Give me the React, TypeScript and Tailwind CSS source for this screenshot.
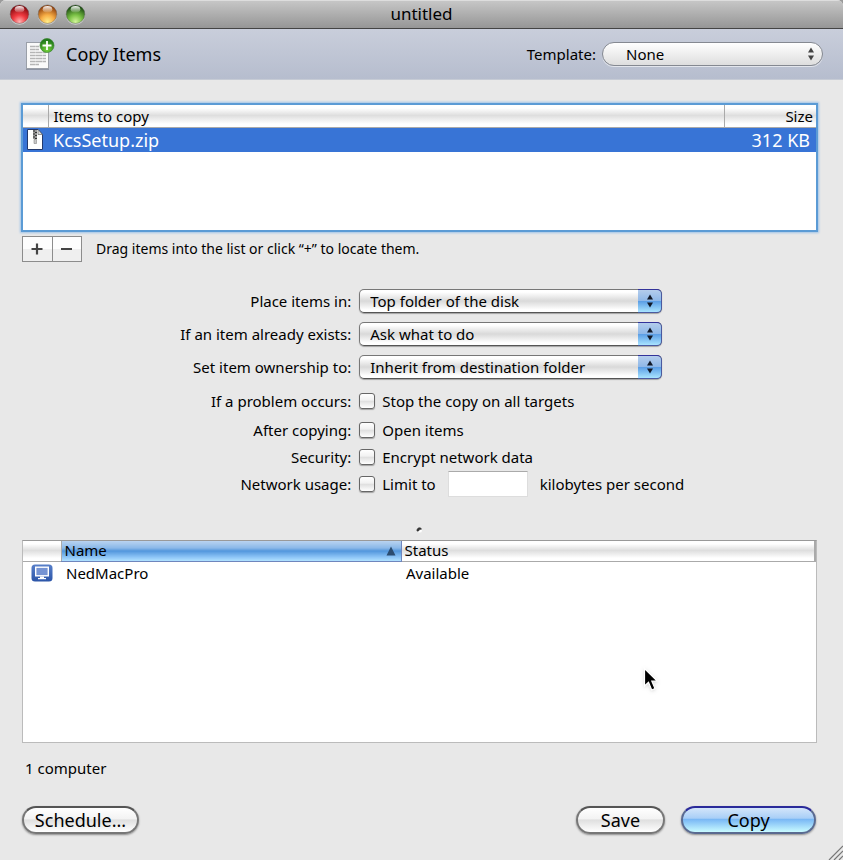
import { FunctionComponent, ReactNode, useState } from "react";

interface SelectProps {
  id: string;
  value: string;
}

const Arrows: FunctionComponent<{ color: string }> = ({ color }) => (
  <svg width="8" height="14" viewBox="0 0 8 14" fill={color}>
    <path d="M4 0.5 7 5.5H1z" />
    <path d="M4 13.5 1 8.5h6z" />
  </svg>
);

const AquaSelect: FunctionComponent<SelectProps> = ({ id, value }) => (
  <div className="relative h-6 w-[303px]">
    <select
      id={id}
      defaultValue={value}
      className="block h-6 w-full appearance-none rounded-[5px] border border-[#777] border-b-[#555] bg-linear-to-b from-white from-10% via-[#d9d9d9] via-50% to-white to-90% pr-7 pl-[10px] leading-5 shadow-[0_1px_1px_rgba(0,0,0,0.3)]"
    >
      <option>{value}</option>
    </select>
    <span className="pointer-events-none absolute inset-y-0 right-0 flex w-6 items-center justify-center rounded-r-[5px] border border-l-0 border-[#4a5aa0] border-t-[#33339a] bg-[linear-gradient(#b4cdec,#8fb8e8_48%,#5c9fe6_52%,#a9e4ff)]">
      <Arrows color="#111827" />
    </span>
  </div>
);

const FormRow: FunctionComponent<{ children: ReactNode }> = ({ children }) => (
  <div className="flex items-center gap-2">{children}</div>
);

interface CheckRowProps {
  title: string;
  label: string;
  id: string;
  children?: ReactNode;
}

const CheckRow: FunctionComponent<CheckRowProps> = ({ title, label, id, children }) => (
  <FormRow>
    <span className="w-5/12 text-right">{title}</span>
    <div className="flex h-[27px] items-center">
      <input
        id={id}
        type="checkbox"
        className="h-4 w-4 appearance-none rounded-[3px] border border-[#666] bg-[linear-gradient(#fff,#f1f1f1_45%,#dedede_50%,#fff)] shadow-[0_1px_1px_rgba(0,0,0,0.3)] checked:bg-blue-400"
      />
      <label htmlFor={id} className="pl-[7px]">
        {label}
      </label>
      {children}
    </div>
  </FormRow>
);

const TrafficLights = () => (
  <svg width="78" height="24" viewBox="0 0 78 24">
    <defs>
      <radialGradient id="red" cx="0.5" cy="0.9" r="0.8">
        <stop offset="0" stopColor="#ffb4b4" />
        <stop offset="0.45" stopColor="#f03a40" />
        <stop offset="1" stopColor="#8a0b10" />
      </radialGradient>
      <radialGradient id="amber" cx="0.5" cy="0.9" r="0.8">
        <stop offset="0" stopColor="#ffed88" />
        <stop offset="0.45" stopColor="#f7ad45" />
        <stop offset="1" stopColor="#94430c" />
      </radialGradient>
      <radialGradient id="green" cx="0.5" cy="0.9" r="0.8">
        <stop offset="0" stopColor="#d2f59a" />
        <stop offset="0.45" stopColor="#7bc246" />
        <stop offset="1" stopColor="#1d4f12" />
      </radialGradient>
      <linearGradient id="shine" x1="0" y1="0" x2="0" y2="1">
        <stop offset="0" stopColor="#fff" stopOpacity="0.95" />
        <stop offset="1" stopColor="#fff" stopOpacity="0.1" />
      </linearGradient>
    </defs>
    {["red", "amber", "green"].map((name, i) => (
      <g key={name} transform={`translate(${i * 28} 0)`}>
        <circle cx="10.5" cy="13.2" r="9.5" fill="#fff" opacity="0.5" />
        <circle cx="10.5" cy="12.2" r="9.3" fill={`url(#${name})`} stroke="#555" strokeOpacity="0.5" strokeWidth="0.8" />
        <ellipse cx="10.5" cy="7.2" rx="4.8" ry="3.2" fill="url(#shine)" />
      </g>
    ))}
  </svg>
);

const CopyItemsIcon = () => (
  <svg width="30" height="34" viewBox="0 0 30 34">
    <defs>
      <radialGradient id="badge" cx="0.5" cy="0.8" r="0.7">
        <stop offset="0" stopColor="#78d53c" />
        <stop offset="1" stopColor="#20791b" />
      </radialGradient>
    </defs>
    <path d="M1 32.5h23" stroke="#6f7685" strokeOpacity="0.6" />
    <rect x="1.5" y="5.5" width="22" height="26" fill="#fafafa" stroke="#9a9fa8" />
    <path
      d="M5 9.5h9M5 12.5h9M5 15.5h16M5 18.5h16M5 21.5h16M5 24.5h16M5 27.5h9"
      stroke="#b5b5b5"
      strokeWidth="1.3"
      strokeDasharray="5 0.3 7 0.4"
    />
    <circle cx="22" cy="8.5" r="7" fill="url(#badge)" stroke="#3c8531" strokeWidth="0.7" />
    <path d="M22 4v9M17.5 8.5h9" stroke="#fff" strokeWidth="1.8" />
  </svg>
);

const ZipIcon = () => (
  <svg width="16" height="21" viewBox="0 0 16 21" className="block">
    <path d="M0.5 0.5H11L15.5 5.5V20.5H0.5z" fill="#fff" stroke="#22396d" />
    <path d="M11 0.5V5.5H15.5z" fill="#ddd" stroke="#555" strokeWidth="0.6" />
    <path d="M6 1h4v9H6z" fill="#999" />
    <path d="M6 2h2M8 3.5h2M6 5h2M8 6.5h2M6 8h2M8 9.5h2" stroke="#333" strokeWidth="1.2" />
    <path d="M7 10.5h2.5v4H7z" fill="#c8c8c8" stroke="#888" strokeWidth="0.6" />
  </svg>
);

const ComputerIcon = () => (
  <svg width="22" height="18" viewBox="0 0 22 18" className="block">
    <defs>
      <linearGradient id="computer" x1="0" y1="0" x2="0" y2="1">
        <stop offset="0" stopColor="#587fc9" />
        <stop offset="1" stopColor="#2c55a8" />
      </linearGradient>
    </defs>
    <rect x="0.5" y="0.5" width="21" height="17" rx="3.5" fill="url(#computer)" />
    <rect x="4.7" y="3.2" width="12.6" height="8.6" fill="#7593d3" stroke="#fff" strokeWidth="1.4" />
    <path d="M9 12.5h4v1.5h2v1.2H7V14h2z" fill="#fff" />
  </svg>
);

const App = () => {
  const [limit, setLimit] = useState("");

  return (
    <div className="relative bg-[#9b9b9b] font-['Noto_Sans','Lucida_Grande',sans-serif] text-[15px] leading-5 text-black">
      <div className="overflow-hidden rounded-t-md bg-[#e8e8e8]">
        <header className="relative flex h-[29px] items-center border-b border-[#444] bg-linear-to-b from-[#c8c8c8] to-[#969696] pl-[9px] shadow-[inset_0_1px_0_#ddd]">
          <TrafficLights />
          <h1 className="absolute inset-x-0 text-center text-[17px]">untitled</h1>
        </header>

        <div className="flex h-[51px] items-center justify-between border-b border-[#c6cbd5] bg-linear-to-b from-[#c9cedb] to-[#b6bdce] pr-5 pl-[25px]">
          <div className="flex items-center gap-[11px]">
            <CopyItemsIcon />
            <h2 className="text-lg">Copy Items</h2>
          </div>
          <div className="flex items-center gap-[6px]">
            <label htmlFor="template">Template:</label>
            <div className="relative w-[221px]">
              <select
                id="template"
                className="block h-6 w-full appearance-none rounded-full border border-[#858991] bg-linear-to-b from-white to-[#dedede] pr-6 pl-[23px] leading-5 shadow-[0_1px_0_rgba(255,255,255,0.6)]"
              >
                <option>None</option>
              </select>
              <span className="pointer-events-none absolute inset-y-0 right-2 flex items-center">
                <Arrows color="#444" />
              </span>
            </div>
          </div>
        </div>

        <main className="pt-[25px]">
          <section className="mr-[27px] ml-[23px]">
            <div className="h-[125px] bg-white shadow-[0_0_0_2px_#5b9bd5,0_0_2px_3px_#9fc4e8]">
              <table className="w-full table-fixed border-collapse">
                <colgroup>
                  <col className="w-[25px]" />
                  <col />
                  <col className="w-[92px]" />
                </colgroup>
                <thead>
                  <tr className="h-[22px] border-b border-[#aaa] bg-linear-to-b from-white from-15% via-[#dedede] via-50% to-white to-90%">
                    <th className="border-r border-[#aaa]" />
                    <th className="border-r border-[#aaa] p-0 pl-[5px] text-left font-normal">Items to copy</th>
                    <th className="p-0 pr-[3px] text-right font-normal">Size</th>
                  </tr>
                </thead>
                <tbody>
                  <tr className="h-[25px] bg-[#3874d6] text-lg leading-6 text-white">
                    <td className="p-0 pl-1">
                      <ZipIcon />
                    </td>
                    <td className="p-0 pl-[5px]">KcsSetup.zip</td>
                    <td className="p-0 pr-[6px] text-right">312 KB</td>
                  </tr>
                </tbody>
              </table>
            </div>
            <div className="-ml-px flex items-center gap-[14px] pt-[6px]">
              <div className="flex h-[26px] w-[60px] border border-[#8c8c8c] bg-[linear-gradient(#fdfdfd_50%,#efefef_50%)]">
                <button aria-label="Add" className="flex flex-1 items-center justify-center border-r border-[#8c8c8c]">
                  <svg width="12" height="12" viewBox="0 0 12 12" stroke="#444" strokeWidth="2.2">
                    <path d="M6 0.5v11M0.5 6h11" />
                  </svg>
                </button>
                <button aria-label="Remove" className="flex flex-1 items-center justify-center">
                  <svg width="12" height="12" viewBox="0 0 12 12" stroke="#444" strokeWidth="2.2">
                    <path d="M0 6h11" />
                  </svg>
                </button>
              </div>
              <p className="text-sm">Drag items into the list or click “+” to locate them.</p>
            </div>
          </section>

          <form className="pt-[27px]">
            <div className="flex flex-col gap-[9px]">
              <FormRow>
                <label htmlFor="place" className="w-5/12 text-right">
                  Place items in:
                </label>
                <AquaSelect id="place" value="Top folder of the disk" />
              </FormRow>
              <FormRow>
                <label htmlFor="exists" className="w-5/12 text-right">
                  If an item already exists:
                </label>
                <AquaSelect id="exists" value="Ask what to do" />
              </FormRow>
              <FormRow>
                <label htmlFor="ownership" className="w-5/12 text-right">
                  Set item ownership to:
                </label>
                <AquaSelect id="ownership" value="Inherit from destination folder" />
              </FormRow>
            </div>
            <div className="pt-2 pb-[2px]">
              <CheckRow id="stop" title="If a problem occurs:" label="Stop the copy on all targets" />
            </div>
            <CheckRow id="open" title="After copying:" label="Open items" />
            <CheckRow id="encrypt" title="Security:" label="Encrypt network data" />
            <CheckRow id="limit" title="Network usage:" label="Limit to">
              <input
                aria-label="Limit"
                value={limit}
                onChange={(e) => setLimit(e.target.value)}
                className="mx-3 h-[26px] w-20 border border-[#ddd] border-t-[#aaa] bg-white px-1"
              />
              <span>kilobytes per second</span>
            </CheckRow>
          </form>

          {/* splitter handle */}
          <div className="mr-1 flex h-[43px] items-end justify-center pb-[7px]">
            <svg width="7" height="6" viewBox="0 0 7 6">
              <circle cx="3.8" cy="3.4" r="2.2" fill="#fff" />
              <path d="M1 4A2.5 2.5 0 0 1 5.5 2L3.5 2.5 2.5 4z" fill="#333" stroke="#333" strokeWidth="0.8" />
            </svg>
          </div>

          <section className="mr-[26px] ml-[22px]">
            <div className="h-[203px] border border-[#bbb] border-t-[#999] bg-white">
              <table className="w-full table-fixed border-collapse">
                <colgroup>
                  <col className="w-[38px]" />
                  <col className="w-[340px]" />
                  <col />
                </colgroup>
                <thead>
                  <tr className="h-5 border-b border-[#aaa] bg-linear-to-b from-white from-15% via-[#dedede] via-50% to-white to-90%">
                    <th />
                    <th className="border-x border-b border-[#6f86bd] border-l-[#aaa] bg-[linear-gradient(#b9d3f0,#8ab8e8_35%,#5296dc_50%,#8cc4f6_80%,#b0e2ff)] p-0 pr-[5px] pl-[3px] font-normal">
                      <div className="flex items-center justify-between leading-[19px]">
                        Name
                        <svg width="10" height="10" viewBox="0 0 10 10">
                          <path d="M5 0.5 9.5 9.5h-9z" fill="#2b4c70" />
                        </svg>
                      </div>
                    </th>
                    <th className="border-r-2 border-[#aaa] p-0 pl-[3px] text-left leading-[19px] font-normal">Status</th>
                  </tr>
                </thead>
                <tbody>
                  <tr className="h-6">
                    <td className="p-0 pl-2">
                      <ComputerIcon />
                    </td>
                    <td className="p-0 pl-[5px]">NedMacPro</td>
                    <td className="p-0 pl-[5px]">Available</td>
                  </tr>
                </tbody>
              </table>
            </div>
            <p className="pt-[15px] pl-[3px]">1 computer</p>
          </section>

          <footer className="relative flex justify-between pt-7 pr-[27px] pb-[26px] pl-[22px] text-lg leading-6">
            <button className="h-7 w-[117px] rounded-full border-2 border-[#777] border-t-[#555] bg-[linear-gradient(#fff,#f3f3f3_45%,#dfdfdf_50%,#fff)] shadow-[0_1px_2px_rgba(0,0,0,0.4)]">
              Schedule...
            </button>
            <div className="flex gap-4">
              <button className="h-7 w-[89px] rounded-full border-2 border-[#777] border-t-[#555] bg-[linear-gradient(#fff,#f3f3f3_45%,#dfdfdf_50%,#fff)] shadow-[0_1px_2px_rgba(0,0,0,0.4)]">
                Save
              </button>
              <button className="h-7 w-[135px] rounded-full border-2 border-[#5a6a90] border-t-[#2a2a9a] bg-[linear-gradient(#d3e5fa,#a9cff7_42%,#7ab8f5_48%,#c9fbff)] shadow-[0_1px_2px_rgba(0,0,0,0.4)]">
                Copy
              </button>
            </div>
            <svg className="absolute right-0 bottom-0" width="15" height="15" viewBox="0 0 15 15" stroke="#777" strokeWidth="1.2">
              <path d="M1 15 15 1M6 15l9-9M11 15l4-4" />
            </svg>
          </footer>
        </main>
      </div>

      {/* mouse pointer */}
      <svg className="pointer-events-none absolute top-[667px] left-[643px] drop-shadow" width="16" height="25" viewBox="0 0 16 25">
        <path d="M1.5 1.5V19l4-3.8L8.7 23l3.3-1.4L8.8 14h5.4z" fill="#000" stroke="#fff" strokeWidth="1.2" />
      </svg>
    </div>
  );
};

export default App;
